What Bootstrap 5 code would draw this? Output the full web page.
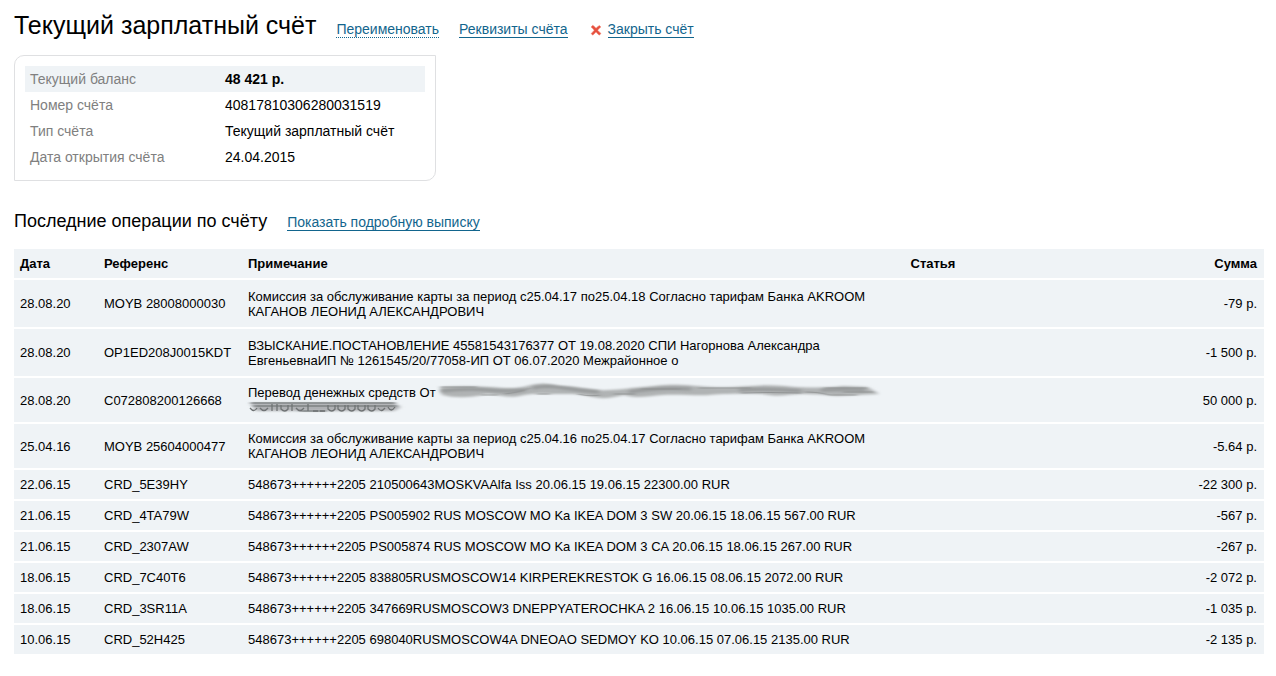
<!DOCTYPE html>
<html lang="ru">
<head>
<meta charset="utf-8">
<meta name="viewport" content="width=device-width, initial-scale=1">
<title>Текущий зарплатный счёт</title>
<link href="https://cdn.jsdelivr.net/npm/bootstrap@5.3.0/dist/css/bootstrap.min.css" rel="stylesheet">
<style>
  body { font-family: "Liberation Sans", Arial, sans-serif; font-size: 14px; line-height: 16px; color: #000; background: #fff; }
  .page { padding: 10px 12px 22px 14px; }
  .page-title { font-size: 25px; line-height: 30px; }
  .section-head { margin-top: 29px; }
  .section-title { font-size: 18px; line-height: 22px; }
  .act { color: #12658d; border-bottom: 1px solid #12658d; text-decoration: none; line-height: 16px; }
  .act-dotted { border-bottom-style: dotted; }
  .act-close { margin-left: 22px; gap: 6px; }
  .summary { max-width: 422px; margin-top: 15px; padding: 10px; border: 1px solid #dfe0e2; border-radius: 10px 0; }
  .summary th, .summary td { padding: 5px; font-weight: 400; }
  .summary th { width: 195px; color: #808080; }
  .summary tr:first-child { background: #eff3f6; }
  .ops { font-size: 13px; line-height: 15px; margin-top: 17px; }
  .ops tr { background: #eff3f6; }
  .ops th, .ops td { padding: 7px 7px 7px 6px; vertical-align: middle; }
  .ops tbody tr { border-top: 2px solid #fff; }
  .ops .tall { height: 49px; }
  .c-date { width: 84px; }
  .c-ref { width: 144px; }
  .c-note { width: 53%; }
  .smudge { overflow: visible; vertical-align: top; }
</style>
</head>
<body>
<main class="page container-fluid">
  <header class="d-flex flex-wrap align-items-baseline">
    <h1 class="page-title fw-normal mb-0 me-3 pe-1">Текущий зарплатный счёт</h1>
    <nav class="d-flex flex-wrap align-items-center" aria-label="Действия со счётом">
      <a class="act act-dotted me-3" href="#">Переименовать</a>
      <a class="act ms-1" href="#">Реквизиты счёта</a>
      <span class="act-close d-flex align-items-center">
        <svg width="12" height="12" viewBox="0 0 12 12" aria-hidden="true"><path d="M1 3 2.800 1.300Q4.500 2.500 6 4.300 7.600 2.500 9.400 1.500L10.900 2.900Q9 4.300 7.700 6.200 9.200 8 11 9.400L9.300 11.200Q7.400 9.800 6 8 4.400 9.900 2.700 11.200L1.100 9.500Q3 8 4.200 6.200 2.800 4.300 1 3Z" fill="#e6503f" stroke="#f0836f" stroke-width=".5"/></svg>
        <a class="act" href="#">Закрыть счёт</a>
      </span>
    </nav>
  </header>

  <section class="summary">
    <table class="w-100">
      <tbody>
        <tr><th scope="row">Текущий баланс</th><td><b>48 421 р.</b></td></tr>
        <tr><th scope="row">Номер счёта</th><td>40817810306280031519</td></tr>
        <tr><th scope="row">Тип счёта</th><td>Текущий зарплатный счёт</td></tr>
        <tr><th scope="row">Дата открытия счёта</th><td>24.04.2015</td></tr>
      </tbody>
    </table>
  </section>

  <div class="section-head d-flex flex-wrap align-items-baseline">
    <h2 class="section-title fw-normal mb-0 me-3 pe-1">Последние операции по счёту</h2>
    <a class="act" href="#">Показать подробную выписку</a>
  </div>

  <table class="ops w-100">
    <thead>
      <tr><th class="c-date" scope="col">Дата</th><th class="c-ref" scope="col">Референс</th><th class="c-note" scope="col">Примечание</th><th scope="col">Статья</th><th class="text-end" scope="col">Сумма</th></tr>
    </thead>
    <tbody>
      <tr class="tall"><td>28.08.20</td><td>MOYB 28008000030</td><td>Комиссия за обслуживание карты за период с25.04.17 по25.04.18 Согласно тарифам Банка AKROOM КАГАНОВ ЛЕОНИД АЛЕКСАНДРОВИЧ</td><td></td><td class="text-end">-79 р.</td></tr>
      <tr class="tall"><td>28.08.20</td><td>OP1ED208J0015KDT</td><td>ВЗЫСКАНИЕ.ПОСТАНОВЛЕНИЕ 45581543176377 ОТ 19.08.2020 СПИ Нагорнова Александра ЕвгеньевнаИП № 1261545/20/77058-ИП ОТ 06.07.2020 Межрайонное о</td><td></td><td class="text-end">-1 500 р.</td></tr>
      <tr><td>28.08.20</td><td>C072808200126668</td><td>Перевод денежных средств От
        <svg class="smudge" width="442" height="15" viewBox="0 0 442 15" aria-hidden="true">
          <defs>
            <filter id="soft" x="-5%" y="-50%" width="110%" height="200%"><feGaussianBlur stdDeviation="2 1"/></filter>
            <filter id="fine" x="-5%" y="-50%" width="110%" height="200%"><feGaussianBlur stdDeviation="2 .4"/></filter>
          </defs>
          <path filter="url(#soft)" fill="#b0b3b4" d="M1 2C18 1 34 1 50 2S78 4 88 1Q104-4 120 1C136 1 148 4 160 5S190 3 204 2 226-1 244 0 274 3 294 2 328-1 346 1 388 3 404 1L428 2Q434 5 440 9C424 10 412 10 398 11Q380 9 366 9C350 9 340 12 330 10S280 9 270 10 238 9 224 10 198 14 185 10Q166 15 154 12C140 8 128 9 112 9Q96 8 85 10C72 14 61 10 48 9Q23 15 3 10Z"/>
          <path filter="url(#soft)" fill="none" stroke="#96999a" stroke-width="3" d="M2 6Q28 3 48 5T86 5M94 3Q107 0 125 3T160 7M190 7Q220 2 252 4M300 5Q328 3 362 6M382 5Q402 4 426 5"/>
          <path filter="url(#fine)" fill="none" stroke="#8a8d8e" stroke-width=".8" d="M2 2H38M42 10H59M66 9Q82 7 91 3M98 9H111M139 9Q152 12 161 10M175 9H196M202 4H242M260 3H312M302 8Q330 7 362 8M366 7Q381 7 390 10H418M386 3H428M404 7H434"/>
        </svg>
        <svg class="smudge" width="153" height="15" viewBox="0 0 153 15" aria-hidden="true">
          <defs>
            <filter id="digits" x="-5%" y="-50%" width="110%" height="200%"><feGaussianBlur stdDeviation=".6 .4"/></filter>
          </defs>
          <path filter="url(#soft)" fill="#a2a5a7" fill-opacity=".85" d="M2 3H146L153 7 146 11H8Z"/>
          <path filter="url(#fine)" fill="none" stroke="#7f8384" stroke-width="1.500" d="M3 3H147M6 6H148M52 11H78"/>
          <path filter="url(#digits)" fill="none" stroke="#6f7374" stroke-width="1.300" d="M2 8Q6 13 9 8M12 8Q16 13 20 8M24 4V11M29 4V11M33 5V9Q37 13 40 9V5M44 4V11M48 8Q52 13 56 8M60 4V11M65 11H70M72 11H77M80 5V9Q84 13 87 9V5M90 5V9Q94 13 97 9V5M100 5V9Q104 13 107 9V5M110 5V9Q114 13 117 9V5M120 5V9Q124 13 127 9V5M130 8Q133 13 137 8M140 7Q143 13 147 7"/>
        </svg></td><td></td><td class="text-end">50 000 р.</td></tr>
      <tr><td>25.04.16</td><td>MOYB 25604000477</td><td>Комиссия за обслуживание карты за период с25.04.16 по25.04.17 Согласно тарифам Банка AKROOM КАГАНОВ ЛЕОНИД АЛЕКСАНДРОВИЧ</td><td></td><td class="text-end">-5.64 р.</td></tr>
      <tr><td>22.06.15</td><td>CRD_5E39HY</td><td>548673++++++2205 210500643MOSKVAAlfa Iss 20.06.15 19.06.15 22300.00 RUR</td><td></td><td class="text-end">-22 300 р.</td></tr>
      <tr><td>21.06.15</td><td>CRD_4TA79W</td><td>548673++++++2205 PS005902 RUS MOSCOW MO Ka IKEA DOM 3 SW 20.06.15 18.06.15 567.00 RUR</td><td></td><td class="text-end">-567 р.</td></tr>
      <tr><td>21.06.15</td><td>CRD_2307AW</td><td>548673++++++2205 PS005874 RUS MOSCOW MO Ka IKEA DOM 3 CA 20.06.15 18.06.15 267.00 RUR</td><td></td><td class="text-end">-267 р.</td></tr>
      <tr><td>18.06.15</td><td>CRD_7C40T6</td><td>548673++++++2205 838805RUSMOSCOW14 KIRPEREKRESTOK G 16.06.15 08.06.15 2072.00 RUR</td><td></td><td class="text-end">-2 072 р.</td></tr>
      <tr><td>18.06.15</td><td>CRD_3SR11A</td><td>548673++++++2205 347669RUSMOSCOW3 DNEPPYATEROCHKA 2 16.06.15 10.06.15 1035.00 RUR</td><td></td><td class="text-end">-1 035 р.</td></tr>
      <tr><td>10.06.15</td><td>CRD_52H425</td><td>548673++++++2205 698040RUSMOSCOW4A DNEOAO SEDMOY KO 10.06.15 07.06.15 2135.00 RUR</td><td></td><td class="text-end">-2 135 р.</td></tr>
    </tbody>
  </table>
</main>
<script src="https://cdn.jsdelivr.net/npm/bootstrap@5.3.0/dist/js/bootstrap.bundle.min.js"></script>
</body>
</html>
